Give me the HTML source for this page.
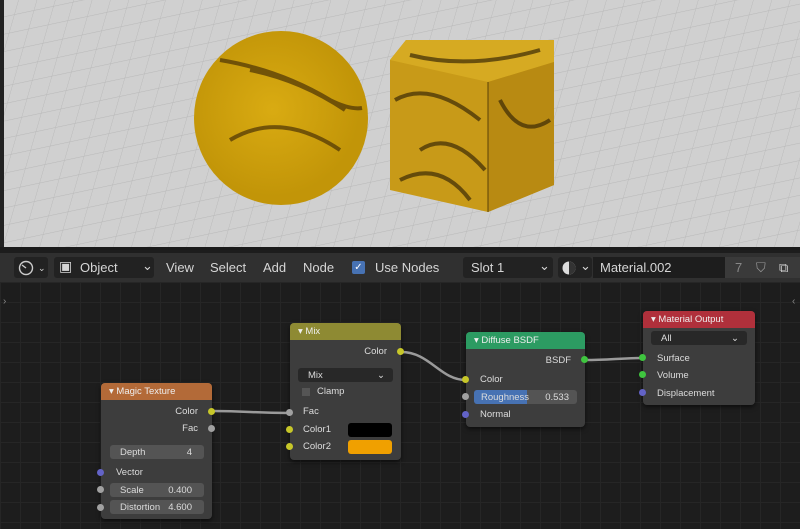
<!DOCTYPE html><html><head><style>
*{margin:0;padding:0;box-sizing:border-box}
body{width:800px;height:529px;overflow:hidden;background:#1d1d1d;font-family:"Liberation Sans",sans-serif;position:relative}
.vp{position:absolute;left:0;top:0;width:800px;height:250px;background:#d0d0d0;overflow:hidden;border-bottom:3px solid #1a1a1a}
.hdr{position:absolute;left:0;top:253px;width:800px;height:29px;background:#303030;color:#d6d6d6;font-size:13px}
.hdr span{position:absolute;top:7px}
.box{position:absolute;background:#222;border-radius:3px}
.canvas{position:absolute;left:0;top:282px;width:800px;height:247px;background-color:#1d1d1d;background-image:linear-gradient(#262626 1px,transparent 1px),linear-gradient(90deg,#262626 1px,transparent 1px);background-size:20px 20px}
.node{position:absolute;background:#3d3d3d;border-radius:4px;box-shadow:0 2px 5px rgba(0,0,0,.6);color:#dcdcdc;font-size:9.5px}
.nh{height:17px;border-radius:4px 4px 0 0;padding:3px 0 0 8px;font-size:9.5px;color:#eee}
.t{position:absolute}
.s{position:absolute;width:7px;height:7px;border-radius:50%}
.f{position:absolute;background:#545454;border-radius:3px;height:14px;padding:2px 0 0 10px}
</style></head><body>
<div class="vp">
<svg width="800" height="250" style="position:absolute;left:0;top:0">
<defs>
<pattern id="p" width="20" height="17" patternUnits="userSpaceOnUse" patternTransform="rotate(-12) skewX(-28)"><path d="M0 0H20M0 0V17" stroke="#b9b9b9" stroke-width="1" fill="none"/></pattern>
<radialGradient id="g" cx="45%" cy="45%"><stop offset="0" stop-color="#d9ab12"/><stop offset="1" stop-color="#c29508"/></radialGradient>
</defs>
<rect width="800" height="250" fill="url(#p)"/>
<rect width="4" height="250" fill="#222"/>
<circle cx="281" cy="118" r="87" fill="url(#g)"/>
<path d="M220 60Q280 70 330 100Q350 110 362 108M250 70Q300 80 345 110M230 140Q280 110 340 150" stroke="#4a3205" stroke-width="4" fill="none" opacity=".7"/>
<polygon points="390,60 406,40 554,40 554,185 488,212 390,190" fill="#c89a18"/>
<polygon points="390,60 406,40 554,40 554,62 488,82" fill="#d6aa22"/>
<polygon points="488,82 554,62 554,185 488,212" fill="#b88a12"/>
<path d="M395 100Q430 80 480 120M420 150Q450 130 485 170M500 100Q520 140 550 120M410 55Q470 70 540 50M400 180Q440 160 470 200" stroke="#3a2a05" stroke-width="4" fill="none" opacity=".7"/>
<path d="M488 82V212" stroke="#5a4208" stroke-width="1"/>
</svg></div>
<div class="hdr">
<div class="box" style="left:14px;top:4px;width:34px;height:21px"></div>
<div class="box" style="left:54px;top:4px;width:100px;height:21px"></div>
<svg style="position:absolute;left:18px;top:7px" width="16" height="16"><circle cx="8" cy="8" r="6.5" stroke="#ccc" stroke-width="1.4" fill="none"/><path d="M8 8L4 5" stroke="#ccc" stroke-width="1.4"/></svg>
<span style="left:38px;font-size:9px;top:10px">⌄</span>
<span style="left:59px;top:5px;font-size:14px">▣</span><span style="left:80px">Object</span><span style="left:142px;top:5px">⌄</span>
<span style="left:166px">View</span><span style="left:210px">Select</span><span style="left:263px">Add</span><span style="left:303px">Node</span>
<div style="position:absolute;left:352px;top:8px;width:13px;height:13px;background:#4772b3;border-radius:2px;color:#fff;font-size:10px;text-align:center;line-height:13px">✓</div>
<span style="left:375px">Use Nodes</span>
<div class="box" style="left:463px;top:4px;width:90px;height:21px"></div><span style="left:471px">Slot 1</span><span style="left:539px;top:5px">⌄</span>
<div class="box" style="left:558px;top:4px;width:34px;height:21px"></div>
<svg style="position:absolute;left:561px;top:7px" width="16" height="16"><circle cx="8" cy="8" r="6.5" fill="#ddd"/><path d="M8 1.5A6.5 6.5 0 0 1 8 14.5Z" fill="#333"/></svg>
<span style="left:580px;top:5px">⌄</span>
<div class="box" style="left:593px;top:4px;width:132px;height:21px;background:#1d1d1d;border-radius:0"></div><span style="left:600px">Material.002</span>
<div class="box" style="left:725px;top:4px;width:75px;height:21px;background:#3a3a3a;border-radius:0"></div><span style="left:735px;color:#888">7</span><span style="left:756px;color:#999">⛉</span><span style="left:779px">⧉</span>
</div>
<div class="canvas"></div>
<svg width="800" height="529" style="position:absolute;left:0;top:0">
<g stroke="#9a9a9a" stroke-width="2.5" fill="none">
<path d="M212 411C250 411 250 413 290 413"/>
<path d="M401 352C430 352 440 380 466 380"/>
<path d="M585 360C610 360 620 358 643 358"/>
</g></svg>
<div class="node" style="left:101px;top:383px;width:111px;height:136px">
<div class="nh" style="background:#b36a38">▾ Magic Texture</div>
<span class="t" style="right:14px;top:23px">Color</span><span class="t" style="right:14px;top:40px">Fac</span>
<div class="f" style="left:9px;top:62px;width:94px">Depth<span style="position:absolute;right:12px">4</span></div>
<span class="t" style="left:15px;top:84px">Vector</span>
<div class="f" style="left:9px;top:100px;width:94px">Scale<span style="position:absolute;right:12px">0.400</span></div>
<div class="f" style="left:9px;top:117px;width:94px">Distortion<span style="position:absolute;right:12px">4.600</span></div>
</div>
<div class="s" style="left:208px;top:408px;background:#c7c729"></div><div class="s" style="left:208px;top:425px;background:#a1a1a1"></div>
<div class="s" style="left:97px;top:469px;background:#6363c7"></div><div class="s" style="left:97px;top:486px;background:#a1a1a1"></div><div class="s" style="left:97px;top:504px;background:#a1a1a1"></div>
<div class="node" style="left:290px;top:323px;width:111px;height:137px">
<div class="nh" style="background:#8e8a33">▾ Mix</div>
<span class="t" style="right:14px;top:23px">Color</span>
<div class="f" style="left:8px;top:45px;width:95px;background:#282828">Mix<span style="position:absolute;right:8px">⌄</span></div>
<div style="position:absolute;left:12px;top:65px;width:8px;height:8px;background:#555"></div><span class="t" style="left:27px;top:63px">Clamp</span>
<span class="t" style="left:13px;top:83px">Fac</span><span class="t" style="left:13px;top:101px">Color1</span><span class="t" style="left:13px;top:118px">Color2</span>
<div style="position:absolute;left:58px;top:100px;width:44px;height:14px;background:#000;border-radius:3px"></div>
<div style="position:absolute;left:58px;top:117px;width:44px;height:14px;background:#f0a000;border-radius:3px"></div>
</div>
<div class="s" style="left:397px;top:348px;background:#c7c729"></div>
<div class="s" style="left:286px;top:409px;background:#a1a1a1"></div><div class="s" style="left:286px;top:426px;background:#c7c729"></div><div class="s" style="left:286px;top:443px;background:#c7c729"></div>
<div class="node" style="left:466px;top:332px;width:119px;height:95px">
<div class="nh" style="background:#2c9b62">▾ Diffuse BSDF</div>
<span class="t" style="right:14px;top:23px">BSDF</span>
<span class="t" style="left:14px;top:42px">Color</span>
<div class="f" style="left:8px;top:58px;width:103px;background:#545454;padding:0"><div style="position:absolute;left:0;top:0;width:53px;height:14px;background:#4772b3;border-radius:3px 0 0 3px"></div><span style="position:absolute;left:7px;top:2px">Roughness</span><span style="position:absolute;right:8px;top:2px">0.533</span></div>
<span class="t" style="left:14px;top:77px">Normal</span>
</div>
<div class="s" style="left:581px;top:356px;background:#3fc53f"></div>
<div class="s" style="left:462px;top:376px;background:#c7c729"></div><div class="s" style="left:462px;top:393px;background:#a1a1a1"></div><div class="s" style="left:462px;top:411px;background:#6363c7"></div>
<div class="node" style="left:643px;top:311px;width:112px;height:94px">
<div class="nh" style="background:#b0303b">▾ Material Output</div>
<div class="f" style="left:8px;top:20px;width:96px;background:#282828">All<span style="position:absolute;right:8px">⌄</span></div>
<span class="t" style="left:14px;top:42px">Surface</span><span class="t" style="left:14px;top:59px">Volume</span><span class="t" style="left:14px;top:77px">Displacement</span>
</div>
<div class="s" style="left:639px;top:354px;background:#3fc53f"></div><div class="s" style="left:639px;top:371px;background:#3fc53f"></div><div class="s" style="left:639px;top:389px;background:#6363c7"></div>
<span style="position:absolute;left:3px;top:296px;color:#888;font-size:10px">›</span><span style="position:absolute;left:792px;top:296px;color:#888;font-size:10px">‹</span>
</body></html>
